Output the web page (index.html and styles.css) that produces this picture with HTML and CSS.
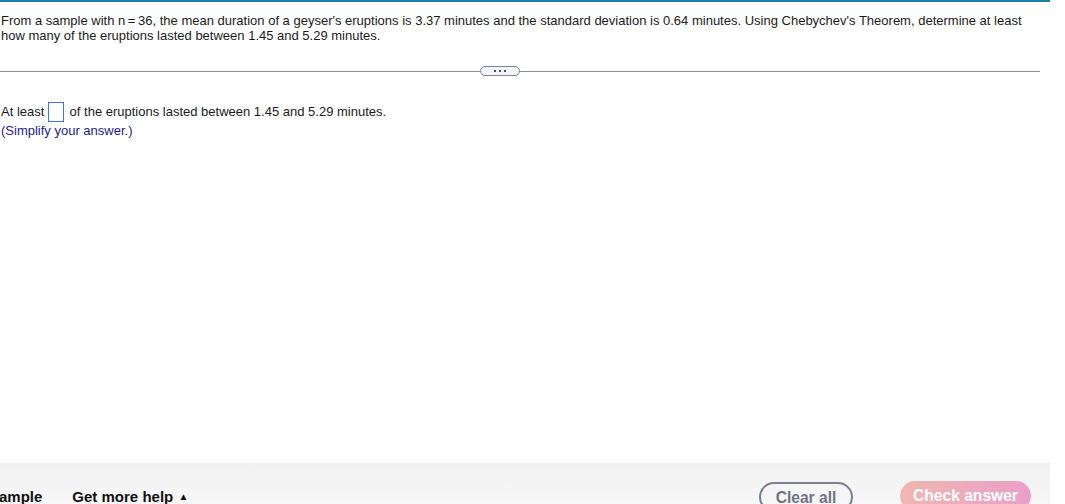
FILE: index.html
```html
<!DOCTYPE html>
<html>
<head>
<meta charset="utf-8">
<link rel="stylesheet" href="styles.css">
</head>
<body>
<div class="page">
  <div class="question">
    <p class="stem">From a sample with n&thinsp;=&thinsp;36, the mean duration of a geyser's eruptions is 3.37 minutes and the standard deviation is 0.64 minutes. Using Chebychev's Theorem, determine at least how many of the eruptions lasted between 1.45 and 5.29 minutes.</p>
    <div class="divider">
      <span class="rule short"></span>
      <span class="pill"><i></i><i></i><i></i></span>
      <span class="rule"></span>
    </div>
    <div class="answer">
      <p class="line">At least <span class="box"></span> of the eruptions lasted between 1.45 and 5.29 minutes.</p>
      <p class="hint">(Simplify your answer.)</p>
    </div>
  </div>
  <div class="footer">
    <span class="link first">ample</span>
    <span class="link">Get more help <span class="caret">&#9650;</span></span>
    <span class="spacer"></span>
    <span class="btn clear">Clear all</span>
    <span class="btn check">Check answer</span>
  </div>
</div>
</body>
</html>
```

FILE: styles.css
```css
html, body {
  margin: 0;
  padding: 0;
  height: 504px;
  overflow: hidden;
  background: #fff;
  font-family: "Liberation Sans", Arial, sans-serif;
  color: #1a1a1a;
}
.page {
  width: 1050px;
  height: 504px;
  display: flex;
  flex-direction: column;
}
.question {
  border-top: 2px solid #1f7fab;
}
.stem {
  margin: 11px 0 0 1px;
  width: 1030px;
  font-size: 13px;
  line-height: 15px;
}
.divider {
  display: flex;
  align-items: center;
  width: 1040px;
  margin-top: 23px;
  height: 10px;
}
.rule {
  flex: 1;
  height: 1px;
  background: #8a8f9c;
}
.rule.short {
  flex: 0 0 480px;
}
.pill {
  box-sizing: border-box;
  width: 40px;
  height: 10px;
  border: 1px solid #7d8594;
  border-radius: 6px;
  background: #f2f4f7;
  display: flex;
  align-items: center;
  justify-content: center;
  gap: 3px;
}
.pill i {
  width: 2px;
  height: 2px;
  background: #4a5160;
}
.answer {
  margin-top: 26px;
  margin-left: 1px;
  font-size: 13px;
}
.line {
  margin: 0;
  line-height: 20px;
  display: flex;
  align-items: center;
  white-space: pre;
}
.box {
  display: inline-block;
  box-sizing: border-box;
  width: 16px;
  height: 20px;
  border: 1px solid #3d78d8;
  margin: 0 2px 0 0;
}
.hint {
  margin: 0;
  line-height: 18px;
  color: #1b1b8f;
}
.footer {
  margin-top: auto;
  height: 41px;
  display: flex;
  align-items: flex-start;
  background: linear-gradient(#f1f1f1, #f7f7f7);
  font-size: 15px;
  font-weight: bold;
  color: #111;
}
.link {
  margin-top: 25px;
  line-height: 18px;
}
.link.first {
  margin-left: -1px;
  margin-right: 30px;
}
.caret {
  font-size: 10px;
  vertical-align: 2px;
  margin-left: 1px;
}
.spacer {
  flex: 1;
}
.btn {
  box-sizing: border-box;
  height: 30px;
  border-radius: 15px;
  line-height: 28px;
  margin-top: 19px;
  font-size: 15.6px;
}
.clear {
  width: 94px;
  border: 2px solid #7b8090;
  color: #6f7485;
  text-align: center;
  margin-right: 47px;
}
.check {
  width: 131px;
  margin-top: 18px;
  margin-right: 19px;
  background: linear-gradient(90deg, #f1b6b1, #e9a0c9);
  color: #fff;
  text-align: center;
  line-height: 30px;
}
```
